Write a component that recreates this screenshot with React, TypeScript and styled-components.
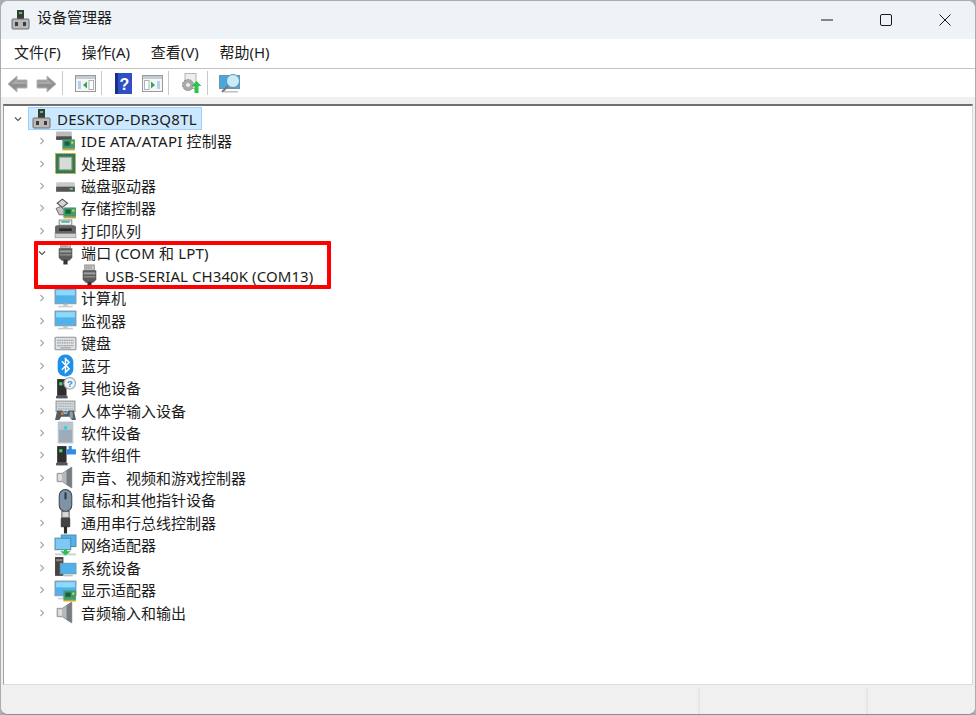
import React from "react";
import styled, { createGlobalStyle } from "styled-components";

const Global = createGlobalStyle`
  html, body { margin: 0; padding: 0; background: #a9aeb0; }
  body { width: 976px; height: 715px; overflow: hidden; }
`;

const FONT = `"Noto Sans", "Noto Sans CJK SC", sans-serif`;

const Window = styled.div`
  box-sizing: border-box; width: 976px; height: 715px; display: flex; flex-direction: column;
  background: #f0f0f0; border: 1px solid #ababab; border-bottom-color: #8c8c8c; border-radius: 8px; overflow: hidden;
  font-family: ${FONT}; font-size: 15px; color: #1c1c1c;
`;
const TitleBar = styled.div`
  flex: 0 0 38px; display: flex; align-items: center; background: #eef3f8; padding-left: 10px;
`;
const TitleText = styled.span`margin-left: 7px; flex: 1; line-height: 20px; margin-top: -6px;`;
const WinBtns = styled.div`display: flex; height: 100%; margin-right: 1px;`;
const WinBtn = styled.div`
  width: 59px; display: flex; align-items: center; justify-content: center;
`;
const MenuBar = styled.div`
  flex: 0 0 30px; display: flex; background: #fff; padding: 0 0 4px 13px; gap: 20.7px; align-items: center;
  border-bottom: 1px solid #c4c4c4; box-sizing: border-box;
`;
const MenuItem = styled.span``;
const ToolBar = styled.div`
  flex: 0 0 28px; display: flex; align-items: center; background: #fff; padding-left: 6px;
`;
const ToolSep = styled.div<{ $m: string }>`width: 1px; height: 24px; background: #c9c9c9; margin: ${(p) => p.$m};`;
const ToolIcon = styled.div<{ $gap?: number }>`
  display: flex; align-items: center; justify-content: center; padding-top: 1px; margin-left: ${(p) => p.$gap ?? 0}px;
`;
const Band = styled.div`flex: 0 0 7px; background: #f0f0f0;`;
const Tree = styled.div`
  flex: 1; margin: 0 2px 0 2px; background: #fff; border-top: 2px solid #6f6f6f; border-left: 1px solid #a0a0a0;
  border-right: 1px solid #d8d8d8; border-bottom: 1px solid #dcdcdc; padding-top: 1.4px; min-height: 0;
`;
const Row = styled.div<{ $indent: number }>`
  display: flex; align-items: center; height: 22.46px; padding-left: ${(p) => p.$indent}px; white-space: nowrap;
`;
const Arrow = styled.div`width: 14px; height: 14px; margin-right: 4px; display: flex; align-items: center; justify-content: center;`;
const IconSlot = styled.div`width: 24px; height: 22px; display: flex; align-items: center; justify-content: center; margin-right: 4px;`;
const Label = styled.span<{ $track?: number }>`line-height: 20px; letter-spacing: ${(p) => p.$track ?? 0}px;`;
const RootSelect = styled.div`
  display: flex; align-items: center; height: 23px; box-sizing: border-box; background: #cce8ff; border: 1px solid #99d1ff; padding: 0 4px 0 0; margin-left: -1px;
`;
const PortGroup = styled.div`
  position: relative;
  &::after { content: ""; position: absolute; left: 30px; top: -1px; width: 297px; height: 48px; box-sizing: border-box; border: 4px solid #fe0000; border-radius: 1px; pointer-events: none; }
`;
const StatusBar = styled.div`
  flex: 0 0 29px; display: flex; background: #f0f0f0; padding-top: 3px; box-sizing: border-box;
`;
const StatusCell = styled.div<{ $w: string }>`
  flex: ${(p) => p.$w}; border-right: 2px solid #e6e6e6;
`;

const Chevron = ({ open }: { open?: boolean }) => (
  <svg width="8" height="8" viewBox="0 0 8 8" fill="none" stroke={open ? "#555" : "#a6a6a6"} strokeWidth="1.1">
    {open ? <path d="M1 2.5 L4 5.5 L7 2.5" /> : <path d="M2.5 1 L5.5 4 L2.5 7" />}
  </svg>
);

const S = ({ children }: { children: React.ReactNode }) => (
  <svg width="23" height="23" viewBox="0 0 22 22">{children}</svg>
);

const Monitor = () => (
  <g>
    <rect x="1" y="2" width="20" height="14" fill="#4fb2ec" stroke="#8a9aa5" />
    <rect x="2" y="3" width="18" height="5" fill="#8fd8fa" />
    <rect x="9" y="16" width="4" height="2" fill="#b8c0c4" />
    <rect x="4" y="18" width="14" height="1.5" fill="#c9ced1" />
  </g>
);
const Board = ({ x = 0, y = 0 }: { x?: number; y?: number }) => (
  <g transform={`translate(${x} ${y})`}>
    <rect x="0" y="0" width="12" height="9" fill="#3f9a6c" />
    <rect x="2" y="2" width="5" height="4" fill="#1e5d40" />
    <rect x="8.5" y="2" width="2" height="2" fill="#d8e04a" />
    <rect x="0" y="9" width="12" height="1.5" fill="#d4a52a" />
  </g>
);
const Port = () => (
  <S>
    <rect x="6.500" y="1" width="9" height="5" fill="#d4d4d4" stroke="#8a8a8a" />
    <path d="M8.500 2v3M10.500 2v3M12.500 2v3" stroke="#777" strokeWidth="0.8" />
    <path d="M4.500 6h13v9l-3 3h-7l-3-3z" fill="#5c5c5c" />
    <rect x="5.500" y="8" width="11" height="2" fill="#a0a0a0" />
    <rect x="5.500" y="11.500" width="11" height="1.500" fill="#8a8a8a" />
    <rect x="9" y="17" width="4" height="4.500" fill="#333" />
  </S>
);
const Computer = () => (
  <svg width="19" height="20" viewBox="0 0 19 20">
    <rect x="6" y="0" width="7" height="9" fill="#3a3a3a" />
    <rect x="8" y="2" width="3" height="2" fill="#3fcf5c" />
    <rect x="1" y="9" width="17" height="10" rx="1" fill="#b9b9b9" stroke="#6f6f6f" />
    <rect x="4" y="12" width="3" height="4" fill="#3c3c3c" />
    <rect x="12" y="12" width="3" height="4" fill="#3c3c3c" />
  </svg>
);
const Speaker = () => (
  <S>
    <path d="M3 7h5l9-6v20l-9-6H3z" fill="#b5b9bc" stroke="#8a8e91" strokeWidth="0.8" />
    <path d="M12 4l5-3v20l-5-3z" fill="#777c80" />
    <rect x="4" y="8" width="3.500" height="6" fill="#dfe1e3" />
  </S>
);
const Tower = ({ badge }: { badge: "q" | "p" }) => (
  <S>
    <rect x="3" y="2" width="9" height="16" fill="#2f2f2f" />
    <rect x="5" y="5" width="3" height="3" fill="#3fdc66" />
    <rect x="2" y="18" width="11" height="2.5" fill="#555" />
    {badge === "q" ? (
      <>
        <circle cx="15" cy="6" r="5.5" fill="#eef2f5" stroke="#9aa4aa" />
        <text x="12.4" y="9.5" fontSize="9" fontWeight="700" fontFamily="Liberation Sans" fill="#3a8fd0">?</text>
      </>
    ) : (
      <path d="M14 2h3v3h4v5h-9V5h2z" fill="#2e8fe0" />
    )}
  </S>
);

const icons: Record<string, React.ReactNode> = {
  ide: (
    <S>
      <rect x="2" y="1.5" width="15" height="5" rx="1" fill="#bcbcbc" />
      <rect x="2" y="6" width="15" height="3.5" fill="#4e4e4e" />
      <Board x={8} y={9} />
    </S>
  ),
  cpu: (
    <S>
      <rect x="1.5" y="1.500" width="19" height="19" fill="#2f7a52" stroke="#c9a227" strokeDasharray="1.500 1" />
      <rect x="5" y="5" width="12" height="12" fill="#d8dcd6" stroke="#9aa29a" />
    </S>
  ),
  disk: (
    <S>
      <rect x="2" y="8" width="18" height="4" rx="1" fill="#c9c9c9" />
      <rect x="2" y="12" width="18" height="5" fill="#555" />
      <rect x="15" y="13.500" width="3" height="1.500" fill="#6fe07a" />
    </S>
  ),
  storage: (
    <S>
      <path d="M3 6l5-4 5 4-5 4z" fill="#d5d5d5" stroke="#555" />
      <path d="M2 11l4-2 6 5v3H5z" fill="#c4c4c4" stroke="#555" strokeWidth="0.8" />
      <Board x={9} y={10} />
    </S>
  ),
  printer: (
    <S>
      <rect x="5" y="1" width="12" height="5" fill="#f2f2f2" stroke="#8a8a8a" />
      <rect x="7" y="2" width="8" height="1.500" fill="#2eb5a0" />
      <rect x="1" y="6" width="20" height="9" rx="2" fill="#666" />
      <rect x="1" y="14" width="20" height="4" fill="#cfcfcf" stroke="#8a8a8a" strokeWidth="0.6" />
      <rect x="5" y="9" width="12" height="2.500" fill="#2a2a2a" />
    </S>
  ),
  port: <Port />,
  computer: <S><Monitor /></S>,
  monitor: <S><Monitor /></S>,
  keyboard: (
    <S>
      <rect x="1" y="5" width="20" height="12" rx="1" fill="#dfe2e4" stroke="#8d9296" />
      <path d="M3 8h16M3 10.500h16M3 13h16" stroke="#9ea3a7" strokeWidth="1.200" strokeDasharray="1.600 .6" />
      <rect x="6" y="14.500" width="10" height="1.200" fill="#9ea3a7" />
    </S>
  ),
  bluetooth: (
    <S>
      <rect x="3.500" y="0.500" width="15" height="21" rx="7" fill="#1e90ea" />
      <path d="M7.500 7l7 7-3.500 3.500v-13L14.500 8l-7 7" fill="none" stroke="#fff" strokeWidth="1.400" />
    </S>
  ),
  other: <Tower badge="q" />,
  hid: (
    <S>
      <rect x="2" y="2" width="18" height="10" fill="#d4d8da" stroke="#8d9296" />
      <path d="M4 4.500h14M4 7h14M4 9.500h14" stroke="#9ea3a7" strokeDasharray="1.600 .6" />
      <path d="M1 20l2-9h5l2 3h2l2-3h5l2 9h-4l-2-3H7l-2 3z" fill="#565d62" />
      <circle cx="8" cy="14" r="1.300" fill="#d9873a" />
      <circle cx="11" cy="12.500" r="1.300" fill="#3a8fd0" />
      <rect x="15" y="12" width="3" height="7" rx="1.500" fill="#8ea0ae" />
    </S>
  ),
  soft: (
    <S>
      <rect x="4" y="1" width="14" height="20" fill="#9eacb7" stroke="#c3ccd2" />
      <rect x="4.500" y="1.500" width="13" height="7" fill="#b8c4cc" />
      <rect x="9.500" y="5" width="3" height="3" fill="#28d6e0" />
    </S>
  ),
  comp: <Tower badge="p" />,
  sound: <Speaker />,
  mouse: (
    <S>
      <rect x="5" y="0.500" width="12" height="21" rx="6" fill="#7f93a6" stroke="#3d4349" />
      <rect x="10" y="3" width="2" height="7" rx="1" fill="#2f3a44" />
    </S>
  ),
  usb: (
    <S>
      <rect x="7.500" y="0.500" width="7" height="6" fill="#d8d8d8" stroke="#666" />
      <rect x="6.500" y="6.500" width="9" height="9" rx="1" fill="#444" />
      <rect x="9.500" y="15" width="3" height="6.500" fill="#2a2a2a" />
    </S>
  ),
  net: (
    <S>
      <rect x="7" y="1" width="14" height="11" fill="#4fb2ec" stroke="#4f8cae" />
      <rect x="1" y="4" width="15" height="11" fill="#7ccaf3" stroke="#4f8cae" />
      <rect x="1" y="18.500" width="20" height="2" fill="#cfd3d5" />
      <path d="M9.500 15h3v1.500h3.500l-5 4-5-4h3.500z" fill="#2fbf4a" />
    </S>
  ),
  sys: (
    <S>
      <rect x="1" y="1" width="8" height="18" fill="#444" />
      <rect x="2" y="3" width="6" height="2" fill="#8a8a8a" />
      <rect x="6" y="7" width="15" height="10" fill="#4fb2ec" stroke="#6f98ae" />
      <rect x="9" y="18" width="9" height="1.500" fill="#b9c2c7" />
    </S>
  ),
  display: (
    <S>
      <Monitor />
      <Board x={9} y={11} />
    </S>
  ),
  audio: <Speaker />,
};

const Back = ({ flip }: { flip?: boolean }) => (
  <svg width="21" height="20" viewBox="0 0 21 20" style={flip ? { transform: "scaleX(-1)" } : undefined}>
    <path d="M1 10 L10 2 V6 H20 V14 H10 V18 Z" fill="#8f8f8f" stroke="#b7b7b7" />
    <path d="M4 10 L10 5 V7.500 H19 V10 Z" fill="#a8a8a8" />
  </svg>
);
const Pane = ({ side }: { side: "l" | "r" }) => (
  <svg width="21" height="17" viewBox="0 0 21 17">
    <rect x="0.500" y="0.500" width="20" height="16" fill="#f4f6f8" stroke="#9a9a9a" />
    <rect x="1" y="1" width="19" height="3" fill="#c5ccd2" />
    <rect x={side === "l" ? 14 : 2.500} y="5.500" width="4.500" height="9" fill="#fff" stroke="#a9b4bd" />
    <rect x={side === "l" ? 3 : 15} y="6" width="3" height="8" fill="#b8d0e8" />
    <path d={side === "l" ? "M12 6.500v7l-4-3.500z" : "M9 6.500v7l4-3.500z"} fill="#2fa84f" />
  </svg>
);
const Help = () => (
  <svg width="17" height="21" viewBox="0 0 17 21">
    <rect width="17" height="21" fill="#2f50c4" />
    <rect x="0" y="0" width="3" height="21" fill="#1a2f8a" />
    <text x="4.500" y="16.500" fontFamily="Liberation Sans" fontWeight="700" fontSize="16" fill="#fff">?</text>
  </svg>
);
const GearUp = () => (
  <svg width="21" height="21" viewBox="0 0 21 21">
    <rect x="4" y="0.500" width="11" height="15" fill="#eee" stroke="#b5b5b5" />
    <circle cx="7" cy="12" r="5.500" fill="#aaa" stroke="#888" strokeDasharray="2 1" />
    <circle cx="7" cy="12" r="2" fill="#eee" />
    <path d="M15.500 8l5 5h-3v7h-4v-7h-3z" fill="#2fc24a" />
  </svg>
);
const Scan = () => (
  <svg width="23" height="21" viewBox="0 0 23 21">
    <rect x="0.500" y="2.500" width="20" height="13" fill="#4aa6e0" stroke="#7c8f9c" />
    <circle cx="14" cy="8" r="6.500" fill="#c9ecfb" stroke="#5e93b5" />
    <path d="M9 13 L3 19" stroke="#777" strokeWidth="2" />
    <rect x="5" y="18" width="14" height="1.500" fill="#b8bfc3" />
  </svg>
);

const before = [
  ["ide", "IDE ATA/ATAPI 控制器", 0.2], ["cpu", "处理器"], ["disk", "磁盘驱动器"], ["storage", "存储控制器"], ["printer", "打印队列"],
] as [string, string, number?][];
const after = [
  ["computer", "计算机"], ["monitor", "监视器"], ["keyboard", "键盘"], ["bluetooth", "蓝牙"], ["other", "其他设备"],
  ["hid", "人体学输入设备"], ["soft", "软件设备"], ["comp", "软件组件"], ["sound", "声音、视频和游戏控制器"],
  ["mouse", "鼠标和其他指针设备"], ["usb", "通用串行总线控制器"], ["net", "网络适配器"], ["sys", "系统设备"],
  ["display", "显示适配器"], ["audio", "音频输入和输出"],
] as [string, string][];

const Item = ({ k, t, track }: { k: string; t: string; track?: number }) => (
  <Row $indent={31}>
    <Arrow><Chevron /></Arrow>
    <IconSlot>{icons[k]}</IconSlot>
    <Label $track={track}>{t}</Label>
  </Row>
);

export default function App() {
  return (
    <>
      <Global />
      <Window>
        <TitleBar>
          <Computer />
          <TitleText>设备管理器</TitleText>
          <WinBtns>
            <WinBtn>
              <svg width="12" height="2" viewBox="0 0 12 2"><path d="M0 1H12" stroke="#1a1a1a" /></svg>
            </WinBtn>
            <WinBtn>
              <svg width="12" height="12" viewBox="0 0 12 12"><rect x="0.500" y="0.500" width="11" height="11" rx="1.500" fill="none" stroke="#1a1a1a" /></svg>
            </WinBtn>
            <WinBtn>
              <svg width="12" height="12" viewBox="0 0 12 12"><path d="M0.500 0.500L11.500 11.500M11.500 0.500L0.500 11.500" stroke="#1a1a1a" /></svg>
            </WinBtn>
          </WinBtns>
        </TitleBar>
        <MenuBar>
          <MenuItem>文件(F)</MenuItem>
          <MenuItem>操作(A)</MenuItem>
          <MenuItem>查看(V)</MenuItem>
          <MenuItem>帮助(H)</MenuItem>
        </MenuBar>
        <ToolBar>
          <ToolIcon><Back /></ToolIcon>
          <ToolIcon $gap={8}><Back flip /></ToolIcon>
          <ToolSep $m="0 12px 0 5px" />
          <ToolIcon><Pane side="l" /></ToolIcon>
          <ToolSep $m="0 13px 0 5px" />
          <ToolIcon><Help /></ToolIcon>
          <ToolIcon $gap={10}><Pane side="r" /></ToolIcon>
          <ToolSep $m="0 12px 0 5px" />
          <ToolIcon><GearUp /></ToolIcon>
          <ToolSep $m="0 11px 0 5px" />
          <ToolIcon><Scan /></ToolIcon>
        </ToolBar>
        <Band />
        <Tree>
          <Row $indent={7}>
            <Arrow><Chevron open /></Arrow>
            <RootSelect>
              <IconSlot><Computer /></IconSlot>
              <Label $track={0.27}>DESKTOP-DR3Q8TL</Label>
            </RootSelect>
          </Row>
          {before.map(([k, t, tr]) => <Item key={t} k={k} t={t} track={tr} />)}
          <PortGroup>
            <Row $indent={31}>
              <Arrow><Chevron open /></Arrow>
              <IconSlot>{icons.port}</IconSlot>
              <Label $track={0.15}>端口 (COM 和 LPT)</Label>
            </Row>
            <Row $indent={73}>
              <IconSlot>{icons.port}</IconSlot>
              <Label $track={0.08}>USB-SERIAL CH340K (COM13)</Label>
            </Row>
          </PortGroup>
          {after.map(([k, t]) => <Item key={t} k={k} t={t} />)}
        </Tree>
        <StatusBar>
          <StatusCell $w="0 0 697px" />
          <StatusCell $w="0 0 166px" />
          <StatusCell $w="0 0 107px" />
        </StatusBar>
      </Window>
    </>
  );
}
